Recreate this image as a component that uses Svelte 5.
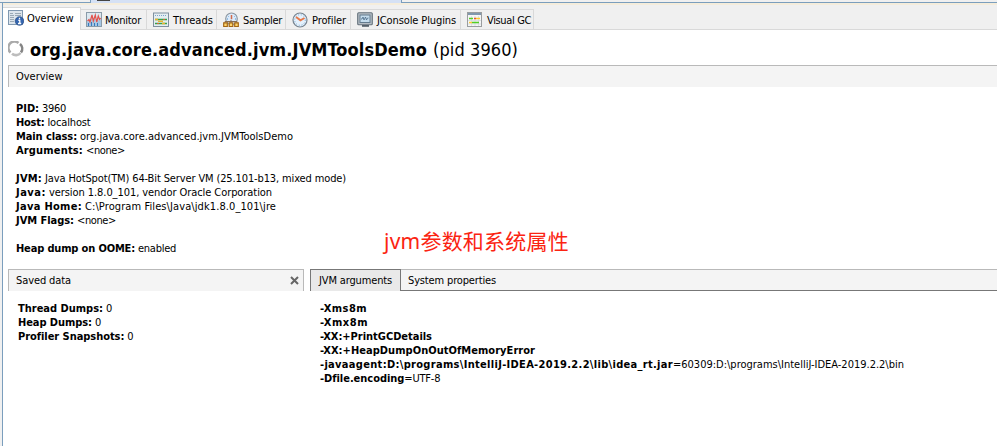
<script>
  const tabs = [
    { label: 'Overview', icon: 'overview', w: 78, tw: 46.5 },
    { label: 'Monitor', icon: 'monitor', w: 66, tw: 36 },
    { label: 'Threads', icon: 'threads', w: 70, tw: 40 },
    { label: 'Sampler', icon: 'sampler', w: 69, tw: 39 },
    { label: 'Profiler', icon: 'profiler', w: 65, tw: 34 },
    { label: 'JConsole Plugins', icon: 'jconsole', w: 110, tw: 79 },
    { label: 'Visual GC', icon: 'gc', w: 73, tw: 44 }
  ];
  const info = [
    ['PID:', 23, '3960', 24],
    ['Host:', 28.5, 'localhost', 43],
    ['Main class:', 61, 'org.java.core.advanced.jvm.JVMToolsDemo', 213],
    ['Arguments:', 67, '<none>', 39],
    null,
    ['JVM:', 26, 'Java HotSpot(TM) 64-Bit Server VM (25.101-b13, mixed mode)', 301],
    ['Java:', 30, 'version 1.8.0_101, vendor Oracle Corporation', 223],
    ['Java Home:', 66, 'C:\\Program Files\\Java\\jdk1.8.0_101\\jre', 191],
    ['JVM Flags:', 58, '<none>', 39],
    null,
    ['Heap dump on OOME:', 119, 'enabled', 38]
  ];
  const saved = [
    ['Thread Dumps:', 85, '0', 6],
    ['Heap Dumps:', 74, '0', 6],
    ['Profiler Snapshots:', 106, '0', 6]
  ];
  const args = [
    ['-Xms8m', 47, '', 0],
    ['-Xmx8m', 48, '', 0],
    ['-XX:+PrintGCDetails', 112, '', 0],
    ['-XX:+HeapDumpOnOutOfMemoryError', 215, '', 0],
    ['-javaagent:D:\\programs\\IntelliJ-IDEA-2019.2.2\\lib\\idea_rt.jar', 353, '=60309:D:\\programs\\IntelliJ-IDEA-2019.2.2\\bin', 231],
    ['-Dfile.encoding', 84, '=UTF-8', 36]
  ];
  function fit(node, width) {
    const natural = node.getBoundingClientRect().width;
    const count = node.textContent.length;
    if (count) node.style.letterSpacing = `${(width - natural) / count}px`;
  }
</script>

{#snippet row(item, gap)}
  <div class="row" style:column-gap="{gap}px">
    {#if item}
      <b use:fit={item[1]}>{item[0]}</b>
      {#if item[2]}<span use:fit={item[3]}>{item[2]}</span>{/if}
    {/if}
  </div>
{/snippet}

{#snippet icon(name)}
  <svg class="icon" width="16" height="16" viewBox="0 0 16 16">
    {#if name === 'overview'}
      <rect x=".5" y=".5" width="14" height="14" fill="#dde5ec" stroke="#8098b0" />
      <path d="M2 3.5h3M7 3.5h6M2 5.5h4M7 5.5h6M2 7.5h4M2 9.5h4M2 11.5h4" stroke="#9aa9b5" />
      <circle cx="11.5" cy="11" r="4.3" fill="#3465af" stroke="#24477f" stroke-width=".7" />
      <path d="M11.5 7.8v1.5M10.3 10.3h1.5v3.2M10 13.5h3.2" fill="none" stroke="#fff" stroke-width="1.3" />
    {:else if name === 'monitor'}
      <rect x=".5" y=".5" width="15" height="14" fill="#dce8f0" stroke="#8a9ba9" />
      <path d="M1 10l2-3 1 4 2-6 1 5 2-5 1 6 2-6 1 4 2-2v7H1z" fill="#8fb8dd" opacity=".7" />
      <path d="M1.5 9l1.5-1.5 1 2.5 2-7 1.3 6 2-6 1.4 7 1.6-6 1.3 3.5 1-1.5" fill="none" stroke="#e2524d" stroke-width="1.2" />
      <path d="M2.5 14v-3M5.5 14v-4M8.5 14v-3M11.5 14v-3" stroke="#367abc" />
    {:else if name === 'threads'}
      <rect x=".5" y="1" width="15" height="13.5" fill="#e4edf2" stroke="#7f909e" />
      <path d="M2 3.5h12" stroke="#7da5c9" stroke-dasharray="1 1" />
      <path d="M2 7.5h12M2 11.5h12" stroke="#38a44b" stroke-width="1.3" />
      <path d="M2 7.5h3M5 9.3h5M9 11.5h3" stroke="#e8b32f" stroke-width="1.4" />
      <path d="M10 7.5h2M4 11.5h2" stroke="#db5f3a" />
    {:else if name === 'sampler'}
      <circle cx="8.5" cy="6.8" r="5.8" fill="#dbeafa" stroke="#8b96a0" stroke-width="1.2" />
      <path d="M5 4l.5.5M12 4l-.5.5M4 7h1M12 7h1" stroke="#4e92ca" />
      <path d="M8.5 3v4.2" stroke="#d26848" stroke-width="1.5" />
      <path d="M2 11V9.5h12V11M8 8v3" fill="none" stroke="#866c52" />
      <path d="M.7 10.8h3.6v3.7H.7zM6.2 10.8h3.6v3.7H6.2zM11.7 10.8h3.6v3.7h-3.6z" fill="#ffd468" stroke="#a26616" stroke-width="1.2" />
    {:else if name === 'profiler'}
      <circle cx="8" cy="8" r="7" fill="#e5f1fc" stroke="#76838f" stroke-width="1.2" />
      <circle cx="8" cy="8" r="5.3" fill="none" stroke="#74a9d6" stroke-dasharray="1 1.8" />
      <path d="M4 5l4.5 3.3L12.5 6" fill="none" stroke="#e7794a" stroke-width="2" />
    {:else if name === 'jconsole'}
      <rect x=".7" y=".7" width="14.6" height="12" rx="1" fill="#b6bec5" stroke="#65727c" stroke-width="1.1" />
      <rect x="3" y="3" width="10" height="7.5" fill="#c4dced" stroke="#637b8e" />
      <path d="M4 7h1l1-2 1 3 1.5-3 1 3 1-2h1" fill="none" stroke="#496a87" stroke-width=".8" />
      <path d="M5 13h7v1.8H5z" fill="#55606a" />
    {:else}
      <rect x=".5" y=".5" width="14" height="14" fill="#f5f6f6" stroke="#9a9d9f" />
      <path d="M1 2h13" stroke="#8198ad" stroke-width="2" />
      <path d="M4.5 4v10M8 4v10M11.5 4v10M1 8.5h13M1 12h13" stroke="#d3d8db" stroke-width=".7" />
      <path d="M2 6.5h4M5 10.5h7" stroke="#52ce24" stroke-width="1.5" /><path d="M7 6.5h2" stroke="#e9562e" stroke-width="1.5" /><path d="M9 6.5h4M2 10.5h3" stroke="#ffc932" stroke-width="1.5" />
    {/if}
  </svg>
{/snippet}

<div class="window">
  <div class="outer-tabs"><i class="first"></i><i class="active"><u></u></i><i class="rest"></i></div>
  <main>
    <nav>
      {#each tabs as tab, i}
        <div class="tab" class:selected={i === 0} class:near={i === 1} style:width="{tab.w}px">
          {@render icon(tab.icon)}<span use:fit={tab.tw}>{tab.label}</span>
        </div>
      {/each}
      <div class="filler"></div>
    </nav>
    <header>
      <svg width="16" height="16" viewBox="0 0 16 16" fill="none" stroke-width="2.6"><path d="M2.5 11.5A6.2 6.2 0 0 1 10.5 2" stroke="#aaa" /><path d="M12 3a6.2 6.2 0 0 1 1 8.4" stroke="#858585" /><path d="M12.6 12A6.2 6.2 0 0 1 4 12.8" stroke="#bdbdbd" /></svg>
      <h1><b use:fit={397}>org.java.core.advanced.jvm.JVMToolsDemo</b><span use:fit={85}>(pid 3960)</span></h1>
    </header>
    <div class="bar overview"><span use:fit={46.5}>Overview</span></div>
    <section class="info">
      {#each info as item}{@render row(item, 3)}{/each}
      <div class="note"><span use:fit={185}>jvm参数和系统属性</span></div>
    </section>
    <div class="columns">
      <section class="saved">
        <div class="bar"><span use:fit={55}>Saved data</span><svg width="9" height="9" viewBox="0 0 9 9"><path d="M1 1l7 7M8 1L1 8" stroke="#666" stroke-width="2" /></svg></div>
        <div class="list">{#each saved as item}{@render row(item, 3)}{/each}</div>
      </section>
      <section class="arguments">
        <div class="subtabs"><div class="on"><span use:fit={73}>JVM arguments</span></div><div class="off"><span use:fit={88}>System properties</span></div></div>
        <div class="list">{#each args as item}{@render row(item, 0)}{/each}</div>
      </section>
    </div>
  </main>
</div>

<style>
  .window { width: 997px; height: 446px; overflow: hidden; box-sizing: border-box; background: #f0f0f0; font: 11px/14px "DejaVu Sans Condensed", "DejaVu Sans", sans-serif; font-stretch: condensed; color: #000; }
  .window * { box-sizing: border-box; }
  b, span { display: inline-block; white-space: pre; flex: none; }
  svg { display: block; flex: none; }
  .outer-tabs { display: flex; height: 3px; padding-left: 2px; background: #f0f0f0; border-bottom: 1px solid #7b9ebd; }
  .outer-tabs .first { width: 89px; border-right: 1px solid #7b9ebd; }
  .outer-tabs .active { width: 311px; height: 3px; background: #d5e1f5; border-right: 1px solid #7b9ebd; }
  .outer-tabs u { display: block; width: 13px; height: 1px; margin-left: 6px; background: #444; }
  .outer-tabs .rest { flex: 1; }
  main { height: 443px; margin-left: 2px; border-left: 1px solid #7b9ebd; background: #fff; }
  nav { height: 27px; display: flex; align-items: flex-end; background: #f0f0f0; border-top: 2px solid #f5eddc; }
  .tab { height: 21px; display: flex; align-items: center; padding-left: 6px; gap: 4px; border: 1px solid #d9d9d9; border-left: 0; background: #f0f0f0; }
  .tab.near { padding-left: 5px; gap: 3px; }
  .tab.selected { height: 23px; border-bottom: 0; background: #fff; padding: 0 0 3px 5px; gap: 3px; }
  .tab span { position: relative; top: 1px; }
  .filler { flex: 1; height: 1px; background: #d9d9d9; }
  header { height: 35px; display: flex; align-items: center; padding: 4px 0 0 5px; gap: 6px; }
  header svg { margin-top: -1px; }
  h1 { margin: 0; display: flex; gap: 6px; font-size: 18px; line-height: 22px; font-weight: 400; }
  .bar { height: 22px; display: flex; align-items: center; padding: 0 4px 0 7px; border: 1px solid #b9b9b9; border-bottom: 0; background: #f4f4f4; justify-content: space-between; }
  .overview { margin-left: 5px; border-right: 0; }
  .info { position: relative; height: 182px; padding: 15px 0 0 13px; }
  .row { display: flex; height: 14px; }
  .note { position: absolute; left: 381px; top: 140px; color: #fb2412; font: 21px/28px "Noto Sans", "Noto Sans CJK SC", sans-serif; }
  .columns { display: flex; gap: 6px; padding-left: 5px; }
  .saved { width: 296px; }
  .arguments { flex: 1; }
  .list { padding: 11px 0 0 10px; }
  .subtabs { height: 22px; display: flex; }
  .on { width: 91px; padding: 4px 0 0 8px; border: 1px solid #777; border-bottom: 0; background: #e9e9e9; }
  .off { flex: 1; padding: 4px 0 0 7px; background: #f4f4f4; border-top: 1px solid #b9b9b9; border-bottom: 1px solid #777; }
</style>
